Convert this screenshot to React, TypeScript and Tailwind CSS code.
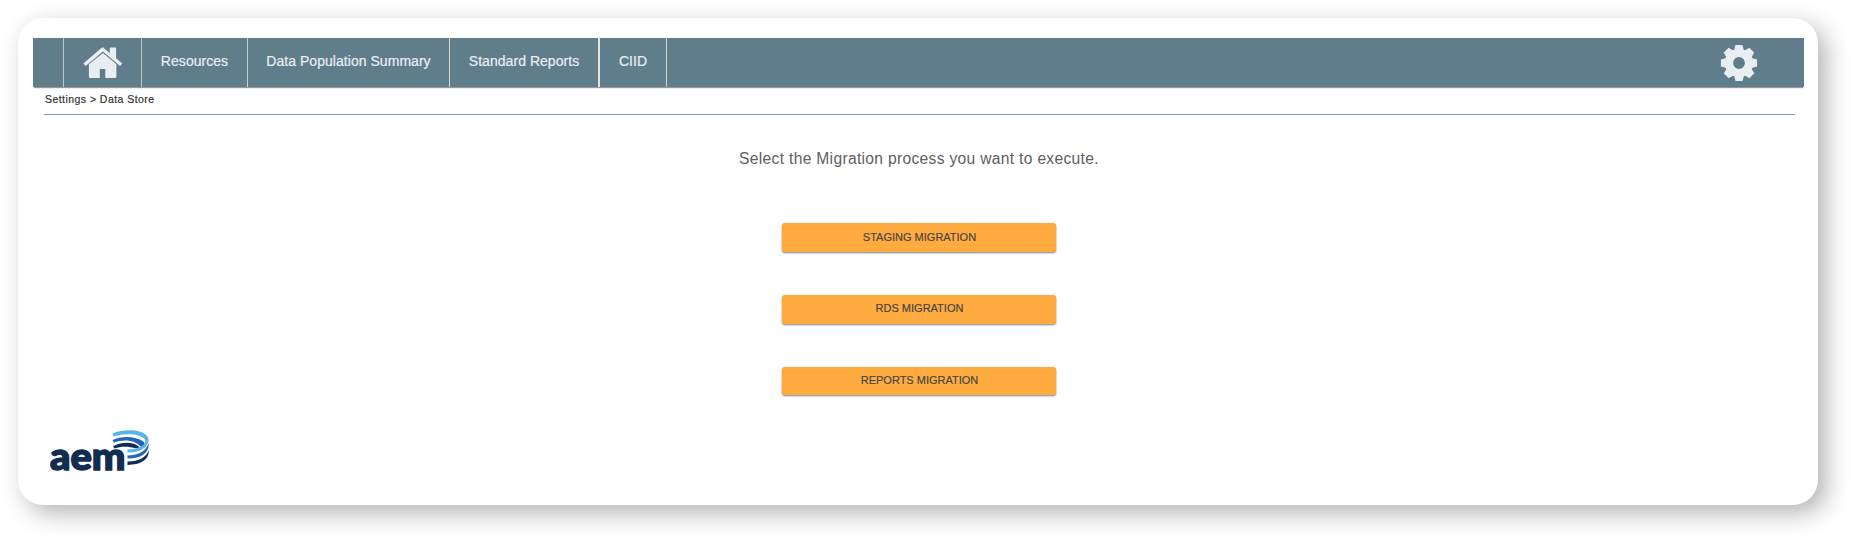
const NAV_ITEMS = [
  { label: "Resources", cell: "w-[106px] border-[#c3ced0]" },
  { label: "Data Population Summary", cell: "w-[202px] border-[#d5dad7]" },
  { label: "Standard Reports", cell: "w-[150px] border-r-2 border-[#ece3d3]" },
  { label: "CIID", cell: "w-[67px] border-[#d8d5ca]" },
];

const MIGRATIONS = ["STAGING MIGRATION", "RDS MIGRATION", "REPORTS MIGRATION"];

function HomeIcon() {
  return (
    <svg width="40" height="32" viewBox="0 0 40 32" fill="#e9eef2" aria-label="Home">
      <path d="M20 .4 26.8 6V1.2Q26.8.5 27.5.5H32.4Q33.1.5 33.1 1.2V11.2L38.8 15.9Q39.3 16.4 38.8 16.9L37.5 18.4Q37 18.9 36.4 18.4L20 4.6 3.2 18.4Q2.7 18.9 2.2 18.4L.8 16.9Q.4 16.4.9 15.9L18.4 1Q20-.4 21.5 1Z" />
      <path d="M20 6.1 33.4 17.3V29.5Q33.4 31 31.9 31H22.3V21.9H16.8V31H7.4Q5.9 31 5.9 29.5V17.3Z" />
    </svg>
  );
}

function GearIcon() {
  return (
    <svg width="38" height="38" viewBox="0 0 38 38" fill="none" aria-label="Settings">
      <circle cx="19" cy="19" r="10" stroke="#e9eef2" strokeWidth="8.2" />
      <g fill="#e9eef2">
        <path id="tooth" d="M13.8 7.5 15.4.9H22.4L24.2 7.5Z" />
        <use href="#tooth" transform="rotate(45 19 19)" />
        <use href="#tooth" transform="rotate(90 19 19)" />
        <use href="#tooth" transform="rotate(135 19 19)" />
        <use href="#tooth" transform="rotate(180 19 19)" />
        <use href="#tooth" transform="rotate(225 19 19)" />
        <use href="#tooth" transform="rotate(270 19 19)" />
        <use href="#tooth" transform="rotate(315 19 19)" />
      </g>
    </svg>
  );
}

function Logo() {
  return (
    <svg width="104" height="60" viewBox="0 0 104 60" fill="none" aria-label="aem">
      <text
        x="0"
        y="41"
        textLength="75.5"
        lengthAdjust="spacingAndGlyphs"
        fill="#112d52"
        stroke="#112d52"
        strokeWidth="1.5"
        className="font-['Lato',sans-serif] text-[37px] font-black"
      >
        aem
      </text>
      <path d="M63 17.6C71 12.6 83 12.4 90 18.4L86 19.2C79 17.2 71 17 64.5 19.4Z" fill="#112d52" />
      <path d="M62.5 11C72 6.2 86 7.2 93.5 12.4L96 17.5 92 19C86 10.6 73 9.6 64 13.8Z" fill="#2465b5" />
      <path d="M62.5 4.4C74-.4 92 0 97.5 7.4C101.5 14.5 94 23.6 77.5 23.6V20.4C90 20.4 97 15 95 10.4C90 4 74 4 63.5 7.4Z" fill="#59b4e9" />
      <path d="M98.8 13.8C99.5 23.6 92 29.6 77.5 29.6V26.4C89 26.4 96.5 21.8 98.8 13.8Z" fill="#2465b5" />
      <path d="M99 20.8C99 31 91 35.8 77.5 35.9V32.6C89 32.4 96.5 28.6 99 20.8Z" fill="#112d52" />
    </svg>
  );
}

export default function App() {
  return (
    <div className="h-[538px] w-[1851px] overflow-hidden bg-white p-[18px] font-['Liberation_Sans',Arial,sans-serif]">
      <div className="flex h-[487px] w-[1800px] flex-col rounded-[25px] bg-white pl-[15px] pr-[14px] pt-5 shadow-[8px_8px_24px_rgba(0,0,0,0.3)]">
        <header className="flex h-[49px] shrink-0 bg-[#607d8b] text-[14px] text-[#e9eff2] shadow-[0_2px_1px_-1px_rgba(100,95,90,0.65)]">
          <div className="w-[31px] border-r border-[#bdc8ca]" />
          <div className="flex w-[78px] items-center justify-center border-r border-[#bdc8ca]">
            <HomeIcon />
          </div>
          {NAV_ITEMS.map((item) => (
            <a
              key={item.label}
              className={`flex items-center justify-center whitespace-nowrap border-r pb-[2px] tracking-[0.04px] [-webkit-text-stroke:0.2px_#e9eff2] ${item.cell}`}
            >
              {item.label}
            </a>
          ))}
          <div className="ml-auto mr-[46px] flex items-center pt-px">
            <GearIcon />
          </div>
        </header>
        <nav className="ml-[11px] mr-[9px] flex h-[28px] shrink-0 items-center border-b border-[#7899ab] pb-px pl-px text-[10.5px] tracking-[0.45px] text-[#333] [-webkit-text-stroke:0.2px_#333]">
          Settings &gt; Data Store
        </nav>
        <main className="flex flex-col items-center">
          <h1 className="mt-[34px] h-[20px] whitespace-nowrap pl-px text-[15.6px] leading-5 tracking-[0.32px] text-[#606060]">
            Select the Migration process you want to execute.
          </h1>
          <div className="mt-[54.3px] flex flex-col gap-[43.2px] pl-px">
            {MIGRATIONS.map((label) => (
              <button
                key={label}
                className="h-[28.6px] w-[274px] rounded-[3px] bg-[#ffab40] pb-[1.5px] pl-px text-[11px] text-[#444] shadow-[0_1px_2px_rgba(0,0,0,0.5)] [-webkit-text-stroke:0.15px_#444]"
              >
                {label}
              </button>
            ))}
          </div>
        </main>
        <footer className="ml-[17px] mt-[34px]">
          <Logo />
        </footer>
      </div>
    </div>
  );
}
